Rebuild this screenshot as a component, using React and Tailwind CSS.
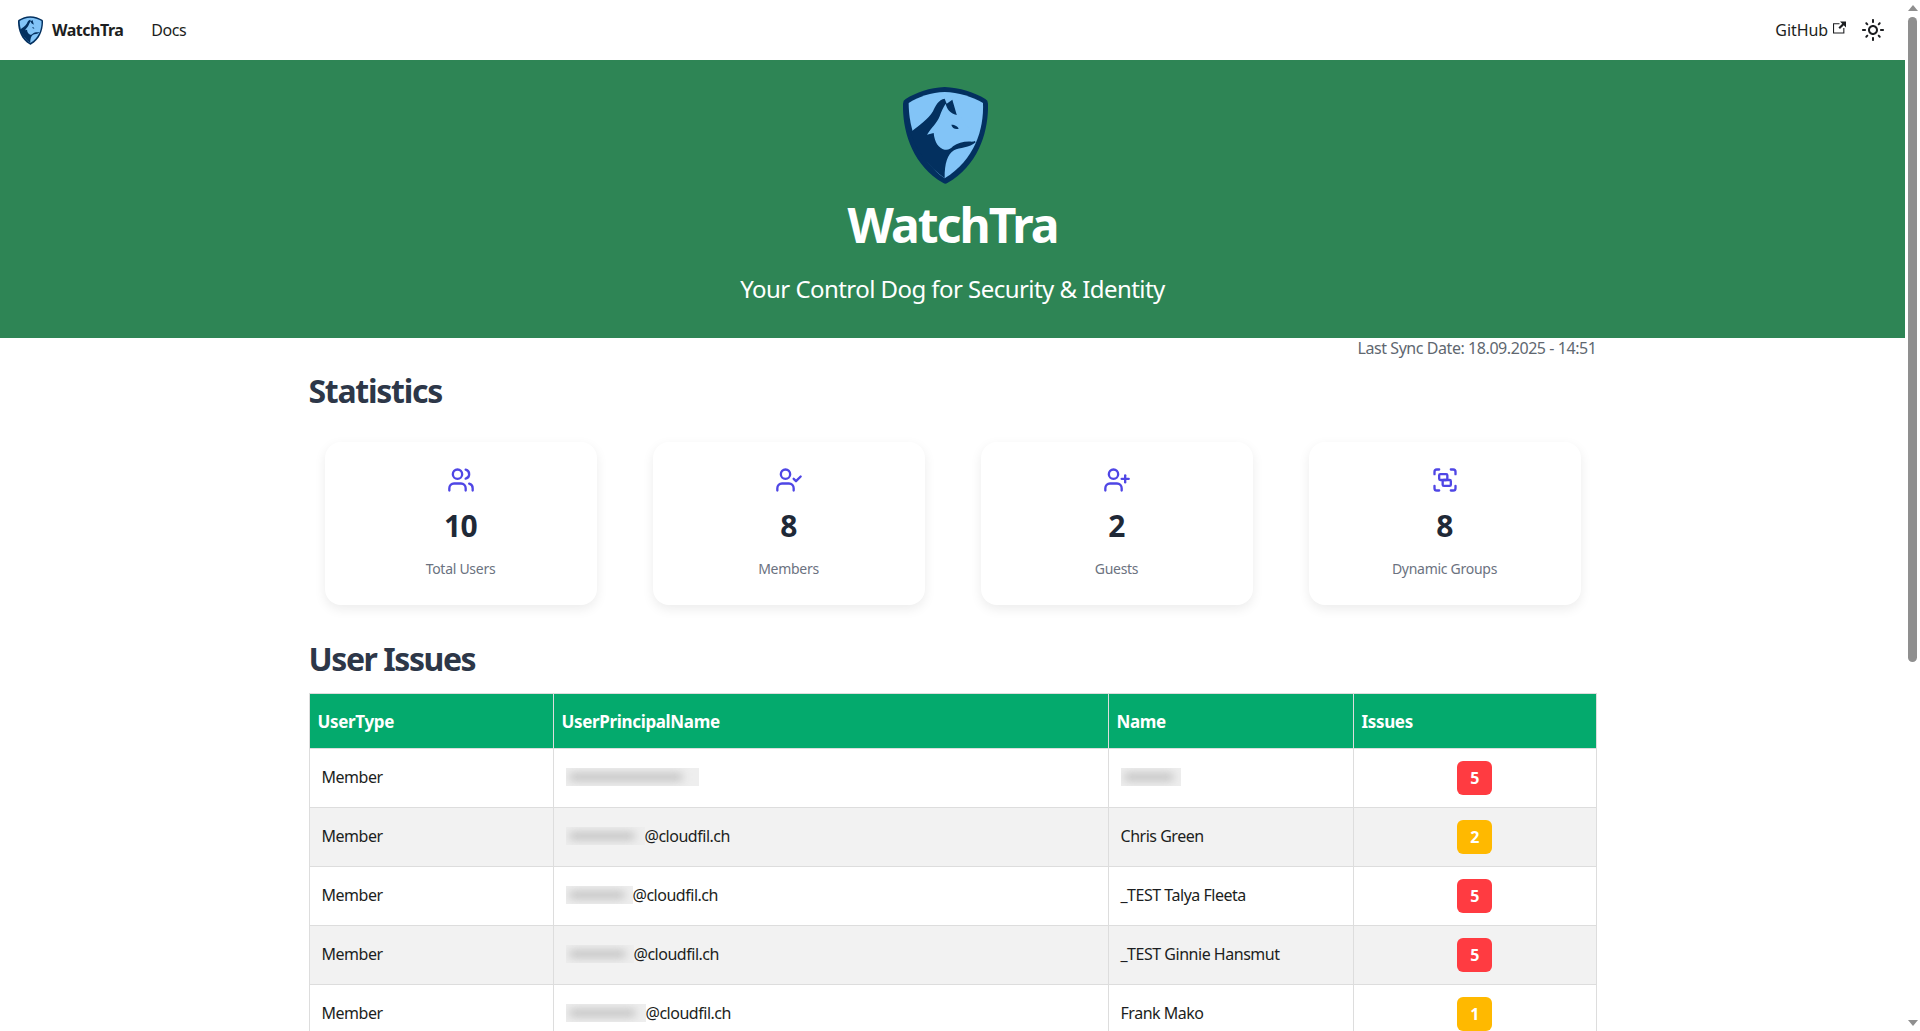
import { Group, UserCheck, UserPlus, Users } from 'lucide-react';

const stats = [
  { icon: Users, value: 10, label: 'Total Users' },
  { icon: UserCheck, value: 8, label: 'Members' },
  { icon: UserPlus, value: 2, label: 'Guests' },
  { icon: Group, value: 8, label: 'Dynamic Groups' },
];

const rows = [
  { hiddenClass: 'w-[133px]', domain: '', name: '', issues: 5 },
  { hiddenClass: 'w-[79px]', domain: '@cloudfil.ch', name: 'Chris Green', issues: 2 },
  { hiddenClass: 'w-[67px]', domain: '@cloudfil.ch', name: '_TEST Talya Fleeta', issues: 5 },
  { hiddenClass: 'w-[68px]', domain: '@cloudfil.ch', name: '_TEST Ginnie Hansmut', issues: 5 },
  { hiddenClass: 'w-[80px]', domain: '@cloudfil.ch', name: 'Frank Mako', issues: 1 },
];

function Logo({ className }) {
  return (
    <svg viewBox="25 22 255 291" className={className}>
      <path
        fill="#03305f"
        d="M150 22C195 24 240 38 272 58Q280 62 280 72C282 150 255 255 158 310Q152 314 146 310C50 255 23 150 25 72Q25 62 33 58C65 38 105 24 150 22Z"
      />
      <path
        fill="#82c4f7"
        d="M150 37C190 38 235 52 265 70C268 150 240 240 150 296C75 245 42 150 42 70C70 52 110 38 150 37Z"
      />
      <path
        fill="#03305f"
        d="M48 158C75 135 100 120 115 95C122 78 132 60 150 57L156 72L173 60L187 108L243 188C225 205 195 203 178 212C158 225 150 250 150 296C100 260 65 215 48 158Z"
      />
      <path
        fill="#82c4f7"
        d="M153 72C157 88 165 100 186 106C200 112 210 125 212 135C225 148 245 160 246 172C246 182 240 186 232 186C212 184 190 188 175 200C168 208 160 212 150 210C132 205 120 190 117 160L97 165C110 145 127 130 135 110C140 95 146 82 153 72Z"
      />
      <path fill="#03305f" d="M170 135C178 134 190 140 192 147C182 150 172 145 170 135Z" />
    </svg>
  );
}

function ExternalIcon() {
  return (
    <svg viewBox="0 0 24 24" className="mb-[5px] ml-[5px] h-[13px] w-[13px] fill-current">
      <path d="M21 13v10h-21v-19h12v2h-10v15h17v-8h2zm3-12h-10.988l4.035 4-6.977 7.07 2.828 2.828 6.977-7.07 4.125 4.172v-11z" />
    </svg>
  );
}

function SunIcon() {
  return (
    <svg viewBox="0 0 24 24" className="ml-[15px] h-6 w-6 fill-current">
      <path d="M12,9c1.65,0,3,1.35,3,3s-1.35,3-3,3s-3-1.35-3-3S10.35,9,12,9 M12,7c-2.76,0-5,2.24-5,5s2.24,5,5,5s5-2.24,5-5 S14.76,7,12,7L12,7z M2,13l2,0c0.55,0,1-0.45,1-1s-0.45-1-1-1l-2,0c-0.55,0-1,0.45-1,1S1.45,13,2,13z M20,13l2,0c0.55,0,1-0.45,1-1 s-0.45-1-1-1l-2,0c-0.55,0-1,0.45-1,1S19.45,13,20,13z M11,2v2c0,0.55,0.45,1,1,1s1-0.45,1-1V2c0-0.55-0.45-1-1-1S11,1.45,11,2z M11,20v2c0,0.55,0.45,1,1,1s1-0.45,1-1v-2c0-0.55-0.45-1-1-1C11.45,19,11,19.45,11,20z M5.99,4.58c-0.39-0.39-1.03-0.39-1.41,0 c-0.39,0.39-0.39,1.03,0,1.41l1.06,1.06c0.39,0.39,1.03,0.39,1.41,0s0.39-1.03,0-1.41L5.99,4.58z M18.36,16.95 c-0.39-0.39-1.03-0.39-1.41,0c-0.39,0.39-0.39,1.03,0,1.41l1.06,1.06c0.39,0.39,1.03,0.39,1.41,0c0.39-0.39,0.39-1.03,0-1.41 L18.36,16.95z M19.42,5.99c0.39-0.39,0.39-1.03,0-1.41c-0.39-0.39-1.03-0.39-1.41,0l-1.06,1.06c-0.39,0.39-0.39,1.03,0,1.41 s1.03,0.39,1.41,0L19.42,5.99z M7.05,18.36c0.39-0.39,0.39-1.03,0-1.41c-0.39-0.39-1.03-0.39-1.41,0l-1.06,1.06 c-0.39,0.39-0.39,1.03,0,1.41s1.03,0.39,1.41,0L7.05,18.36z" />
    </svg>
  );
}

function StatCard({ icon: Icon, value, label }) {
  return (
    <div className="flex h-[163px] flex-col items-center rounded-2xl bg-white pt-6 shadow-[0_4px_12px_rgba(0,0,0,0.08)]">
      <Icon className="h-7 w-7 text-[#4f46e5]" strokeWidth={2} />
      <div className="mt-[10px] text-[30px] leading-[44px] font-bold tracking-[-0.02em] text-[#1f2937]">{value}</div>
      <div className="mt-[11px] text-[14px] leading-5 tracking-[-0.02em] text-[#6b7280]">{label}</div>
    </div>
  );
}

// the reference has these values smudged out, so only the smudge is drawn
function Smudge({ className }) {
  return (
    <span className={`block h-[18px] shrink-0 overflow-hidden bg-[#eeeeee] pt-[5px] pl-[3px] ${className}`}>
      <span className="block h-[8px] w-[88%] rounded bg-[#c2c2c2] blur-[4px]" />
    </span>
  );
}

function IssueBadge({ count }) {
  const color = count >= 5 ? 'bg-[#ff3b41]' : 'bg-[#ffb900]';
  return (
    <span className={`inline-flex h-[34px] w-[35px] items-center justify-center rounded-md text-[16px] font-bold text-white ${color}`}>
      {count}
    </span>
  );
}

function Scrollbar() {
  return (
    <div className="flex w-[15px] shrink-0 flex-col items-center bg-white">
      <svg viewBox="0 0 10 6" className="mt-[5px] h-[6px] w-[10px] fill-[#8f8f8f]">
        <path d="M5 0L10 6H0Z" />
      </svg>
      <div className="mt-[6px] h-[645px] w-[9px] rounded-full bg-[#8f8f8f]" />
      <div className="flex-1" />
      <svg viewBox="0 0 10 6" className="mb-[5px] h-[6px] w-[10px] fill-[#8f8f8f]">
        <path d="M5 6L10 0H0Z" />
      </svg>
    </div>
  );
}

export default function App() {
  return (
    <div className="flex h-screen overflow-hidden bg-white font-['Noto_Sans',sans-serif] text-[#1c1e21]">
      <div className="min-w-0 flex-1 overflow-hidden">
        {/* Navbar */}
        <nav className="flex h-[60px] items-center justify-between pr-5 pl-[18px]">
          <div className="flex items-center">
            <Logo className="h-[29px] w-[25px]" />
            <span className="ml-[9px] text-[16px] font-bold tracking-[-0.03em]">WatchTra</span>
            <span className="ml-[28px] text-[16px] tracking-[-0.03em]">Docs</span>
          </div>
          <div className="flex items-center">
            <span className="text-[16px] tracking-[-0.005em]">GitHub</span>
            <ExternalIcon />
            <SunIcon />
          </div>
        </nav>

        {/* Hero */}
        <header className="flex h-[278px] flex-col items-center bg-[#2e8555] pt-[27px] text-white">
          <Logo className="mr-[14px] h-[97px] w-[85px]" />
          <h1 className="mt-[11px] text-[48px] leading-[60px] font-bold tracking-[-0.04em]">WatchTra</h1>
          <p className="mt-[16px] text-[24px] leading-9 tracking-[-0.023em]">Your Control Dog for Security &amp; Identity</p>
        </header>

        <main className="ml-[292.5px] w-[1320px] px-4">
          <p className="text-right text-[16px] leading-5 tracking-[-0.027em] text-[#606770]">Last Sync Date: 18.09.2025 - 14:51</p>

          <h2 className="mt-[13px] text-[32px] leading-10 font-bold tracking-[-0.04em] text-[#2d3748]">Statistics</h2>
          <div className="mt-[31px] grid grid-cols-4 gap-14 px-4">
            {stats.map(stat => (
              <StatCard key={stat.label} {...stat} />
            ))}
          </div>

          <h2 className="mt-[34px] text-[32px] leading-10 font-bold tracking-[-0.045em] text-[#2d3748]">User Issues</h2>
          <table className="mt-[14px] w-[1287px] table-fixed border-collapse text-[16px] tracking-[-0.03em]">
            <colgroup>
              <col className="w-[244px]" />
              <col className="w-[555px]" />
              <col className="w-[245px]" />
              <col className="w-[243px]" />
            </colgroup>
            <thead>
              <tr className="h-[55px] bg-[#04aa6d] text-left text-[17px] font-bold tracking-[-0.02em] text-white">
                <th className="border border-[#ddd] px-2 pt-[2px]">UserType</th>
                <th className="border border-[#ddd] px-2 pt-[2px]">UserPrincipalName</th>
                <th className="border border-[#ddd] px-2 pt-[2px]">Name</th>
                <th className="border border-[#ddd] px-2 pt-[2px]">Issues</th>
              </tr>
            </thead>
            <tbody>
              {rows.map((row, i) => (
                <tr key={i} className={`h-[59px] ${i % 2 === 1 ? 'bg-[#f2f2f2]' : 'bg-white'}`}>
                  <td className="border border-[#ddd] px-3 pb-[2px]">Member</td>
                  <td className="border border-[#ddd] px-3 pb-[2px]">
                    <div className="flex items-center">
                      <Smudge className={row.hiddenClass} />
                      {row.domain}
                    </div>
                  </td>
                  <td className="border border-[#ddd] px-3 pb-[2px]">
                    {row.name || <Smudge className="w-[60px]" />}
                  </td>
                  <td className="border border-[#ddd] px-3 text-center">
                    <IssueBadge count={row.issues} />
                  </td>
                </tr>
              ))}
            </tbody>
          </table>
        </main>
      </div>
      <Scrollbar />
    </div>
  );
}
